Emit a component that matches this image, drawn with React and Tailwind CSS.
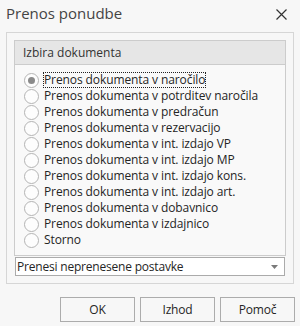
import React from "react";

const options = [
  "Prenos dokumenta v naročilo",
  "Prenos dokumenta v potrditev naročila",
  "Prenos dokumenta v predračun",
  "Prenos dokumenta v rezervacijo",
  "Prenos dokumenta v int. izdajo VP",
  "Prenos dokumenta v int. izdajo MP",
  "Prenos dokumenta v int. izdajo kons.",
  "Prenos dokumenta v int. izdajo art.",
  "Prenos dokumenta v dobavnico",
  "Prenos dokumenta v izdajnico",
  "Storno",
];

function Radio({ checked }) {
  return (
    <div className="w-[15px] h-[15px] rounded-full border border-[#b4b4b4] bg-[#fdfdfd] flex items-center justify-center shrink-0">
      {checked && <div className="w-[7px] h-[7px] rounded-full bg-[#8a8a8a]" />}
    </div>
  );
}

export default function App() {
  return (
    <div
      className="w-[300px] h-[326px] bg-[#f7f7f7] flex flex-col text-[#252525] overflow-hidden"
      style={{ fontFamily: '"Open Sans", "Noto Sans", sans-serif' }}
    >
      <div className="h-[32px] flex items-start justify-between pl-[6px] pr-[13px] pt-[3px] shrink-0">
        <span className="text-[15px] leading-[20px] text-[#444]">Prenos ponudbe</span>
        <svg width="11" height="11" viewBox="0 0 11 11" className="mt-[6px]">
          <path d="M0.5 0.5 L10.5 10.5 M10.5 0.5 L0.5 10.5" stroke="#333" strokeWidth="1.2" />
        </svg>
      </div>
      <div className="mx-[6px] h-[252px] border border-[#d6d6d6] p-[7px] flex flex-col gap-[1px] shrink-0">
        <div className="h-[216px] border border-[#cccccc] bg-[#f9f9f9] flex flex-col">
          <div className="h-[24px] bg-[#e6e6e6] border-b border-[#cccccc] flex items-center pl-[8px] text-[12px] text-[#333]">
            Izbira dokumenta
          </div>
          <div className="pt-[7px] pl-[9px] flex flex-col">
            {options.map((o, i) => (
              <div key={o} className="h-[16px] flex items-center gap-[5px]">
                <Radio checked={i === 0} />
                <span
                  className={
                    "text-[12px] leading-[14px] tracking-[-0.1px] whitespace-nowrap " +
                    (i === 0 ? "outline outline-1 outline-dotted outline-[#222] px-0" : "")
                  }
                >
                  {o}
                </span>
              </div>
            ))}
          </div>
        </div>
        <div className="mx-[1px] h-[19px] border border-[#ababab] bg-white flex items-center justify-between pl-[1px] pr-[6px]">
          <span className="text-[12px] leading-[14px] tracking-[-0.2px]">Prenesi neprenesene postavke</span>
          <svg width="7" height="4" viewBox="0 0 7 4">
            <path d="M0 0 H7 L3.5 4 Z" fill="#7a7a7a" />
          </svg>
        </div>
      </div>
      <div className="flex justify-end gap-[5px] pr-[5px] mt-[13px]">
        {["OK", "Izhod", "Pomoč"].map((b) => (
          <div
            key={b}
            className="w-[75px] h-[25px] border border-[#acacac] bg-[#f7f7f7] flex items-center justify-center text-[12px] tracking-[-0.2px]"
          >
            {b}
          </div>
        ))}
      </div>
    </div>
  );
}
